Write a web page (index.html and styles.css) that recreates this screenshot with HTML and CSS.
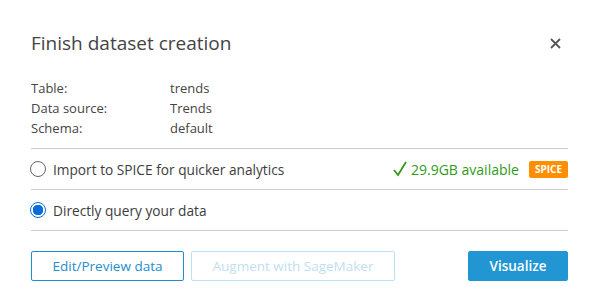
FILE: index.html
```html
<!DOCTYPE html>
<html lang="en">
<head>
    <meta charset="UTF-8">
    <title>Finish dataset creation</title>
    <link rel="stylesheet" href="styles.css">
</head>
<body>
    <div class="modal">
        <header class="modal-header">
            <h1>Finish dataset creation</h1>
            <button class="close" aria-label="Close">
                <svg width="11" height="11" viewBox="0 0 11 11"><path d="M1 1 L10 10 M10 1 L1 10" stroke="#555" stroke-width="1.8"/></svg>
            </button>
        </header>

        <dl class="details">
            <dt>Table:</dt><dd>trends</dd>
            <dt>Data source:</dt><dd>Trends</dd>
            <dt>Schema:</dt><dd>default</dd>
        </dl>

        <div class="options">
            <label class="option">
                <span class="radio"></span>
                <span class="option-label">Import to SPICE for quicker analytics</span>
                <span class="capacity">
                    <svg width="14" height="16" viewBox="0 0 14 16"><path d="M1 9 L5 14 L13 1" fill="none" stroke="#2f9a1a" stroke-width="1.8"/></svg>
                    29.9GB available
                </span>
                <span class="badge">SPICE</span>
            </label>
            <label class="option">
                <span class="radio checked"></span>
                <span class="option-label">Directly query your data</span>
            </label>
        </div>

        <footer class="actions">
            <button class="btn">Edit/Preview data</button>
            <button class="btn disabled">Augment with SageMaker</button>
            <button class="btn primary">Visualize</button>
        </footer>
    </div>
</body>
</html>
```

FILE: styles.css
```css
* {
    margin: 0;
    padding: 0;
    box-sizing: border-box;
}

body {
    font-family: "Open Sans", Arial, sans-serif;
    background: #fff;
    color: #444;
}

.modal {
    width: 598px;
    padding: 26px 30px 0 31px;
}

/* Header */
.modal-header {
    display: flex;
    justify-content: space-between;
    align-items: center;
    height: 34px;
}

.modal-header h1 {
    font-size: 19px;
    font-weight: 400;
    color: #444;
}

.close {
    border: none;
    background: none;
    width: 11px;
    height: 11px;
    margin-right: 7px;
    display: flex;
}

/* Dataset details */
.details {
    display: grid;
    grid-template-columns: 139px 1fr;
    font-size: 13px;
    line-height: 20px;
    color: #444;
    margin-top: 18px;
    padding-bottom: 10px;
    border-bottom: 1px solid #ccc;
}

/* Query mode options */
.option {
    display: flex;
    align-items: center;
    height: 41px;
    border-bottom: 1px solid #ccc;
    font-size: 13.7px;
    color: #3d3d3d;
}

.radio {
    width: 16px;
    height: 16px;
    border: 1px solid #666;
    border-radius: 50%;
    margin-left: -1px;
    margin-right: 7px;
    flex-shrink: 0;
}

.radio.checked {
    border: 1px solid #0a6cd8;
    background: radial-gradient(circle, #0a6cd8 0 5px, #fff 5.5px);
}

.capacity {
    margin-left: auto;
    display: flex;
    align-items: center;
    gap: 4px;
    font-size: 14px;
    color: #2f9a1a;
}

.badge {
    margin-left: 10px;
    background: #ff8f00;
    color: #fff;
    font-size: 10px;
    font-weight: 700;
    padding: 2px 6px;
    border-radius: 2px;
    line-height: 13px;
}

/* Buttons */
.actions {
    display: flex;
    gap: 7px;
    margin-top: 20px;
}

.btn {
    font-family: inherit;
    font-size: 13.5px;
    height: 30px;
    background: #fff;
    color: #1f8dcc;
    border: 1px solid #1f8dcc;
    border-radius: 2px;
    padding: 0 20px;
    width: 153px;
}

.btn.disabled {
    width: 204px;
    color: #bfe0f2;
    border-color: #bfe0f2;
}

.btn.primary {
    margin-left: auto;
    width: 100px;
    background: #2196d3;
    border-color: #2196d3;
    color: #fff;
    font-weight: 600;
}
```
